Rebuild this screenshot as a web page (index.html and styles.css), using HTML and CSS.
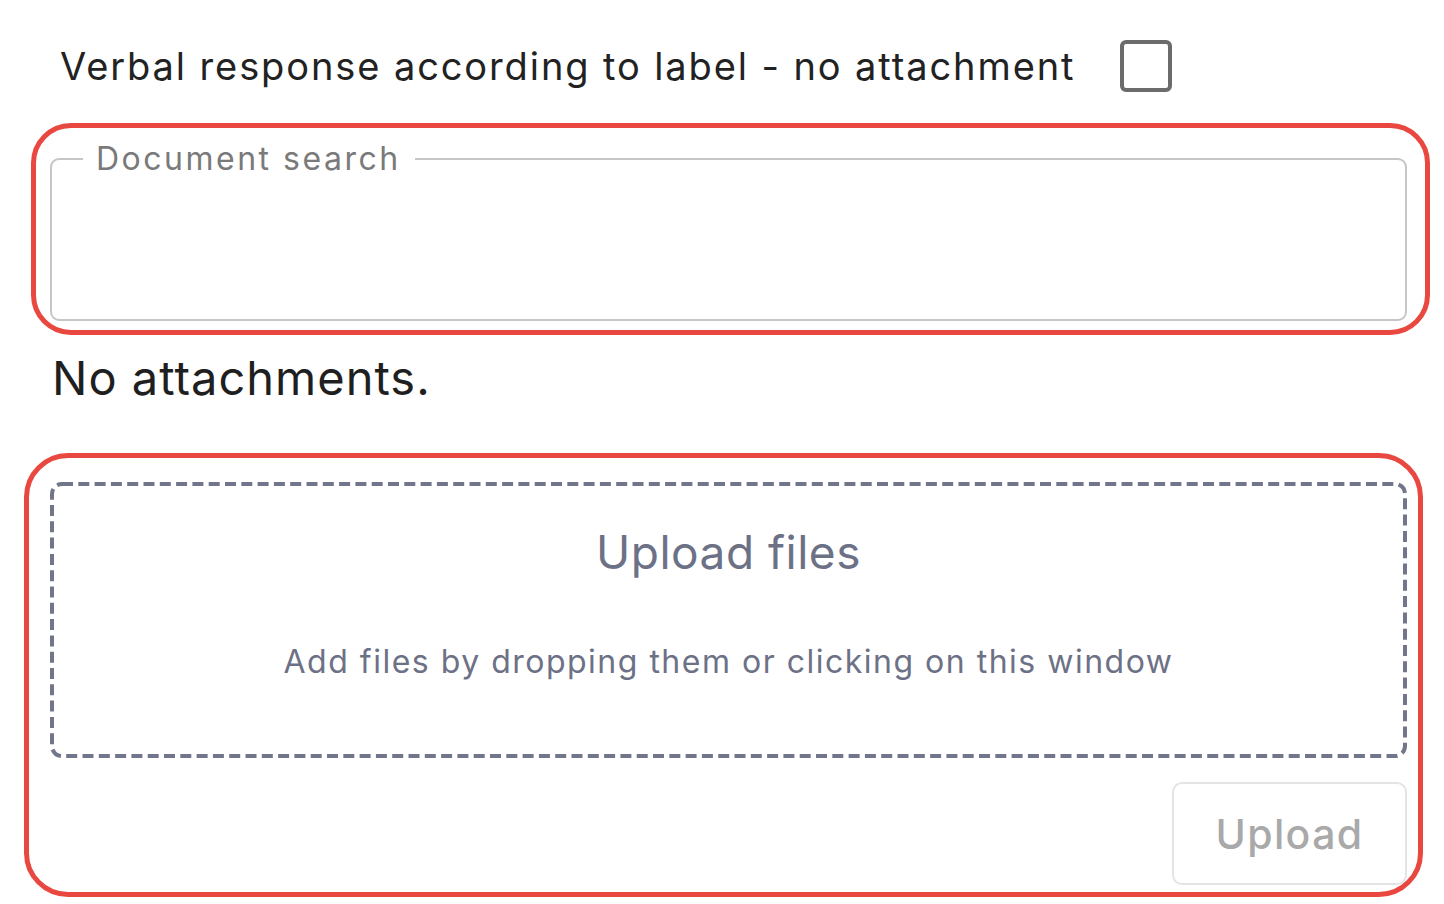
FILE: index.html
```html
<!DOCTYPE html>
<html lang="en">
<head>
<meta charset="utf-8">
<title>Attachments</title>
<link rel="stylesheet" href="styles.css">
</head>
<body>
<main class="page">
  <div class="verbal-row">
    <label class="verbal-label" for="verbal">Verbal response according to label - no attachment</label>
    <span class="checkbox" id="verbal" role="checkbox" aria-checked="false"></span>
  </div>

  <div class="mark mark-search">
    <fieldset class="search-field">
      <legend class="search-legend">Document search</legend>
    </fieldset>
  </div>

  <p class="empty-note">No attachments.</p>

  <div class="mark mark-upload">
    <div class="dropzone">
      <svg class="dash-frame" width="1357" height="276" aria-hidden="true">
        <rect x="2" y="2" width="1353" height="272" rx="10" ry="10"></rect>
      </svg>
      <div class="drop-title">Upload files</div>
      <div class="drop-hint">Add files by dropping them or clicking on this window</div>
    </div>
    <div class="actions">
      <button class="upload-btn" disabled>Upload</button>
    </div>
  </div>
</main>
</body>
</html>
```

FILE: styles.css
```css
html, body {
  margin: 0;
  padding: 0;
  background: #ffffff;
}

body {
  font-family: Inter, "Noto Sans", "Liberation Sans", sans-serif;
  color: #222222;
}

.page {
  display: flex;
  flex-direction: column;
  padding: 40px 0 0 0;
  width: 1444px;
  box-sizing: border-box;
}

.verbal-row {
  display: flex;
  align-items: center;
  gap: 45px;
  margin-left: 60px;
  height: 52px;
}

.verbal-label {
  font-size: 38px;
  line-height: 52px;
  color: #222222;
  letter-spacing: 1.9px;
}

.checkbox {
  width: 44px;
  height: 44px;
  border: 4px solid #6b6b6b;
  border-radius: 6px;
  flex: none;
}

.mark {
  border: 5px solid #e8483f;
  box-sizing: border-box;
}

.mark-search {
  margin-top: 31px;
  margin-left: 31px;
  width: 1399px;
  height: 212px;
  border-radius: 40px;
  padding: 11px 18px 0 14px;
}

.search-field {
  margin: 0;
  padding: 0;
  height: 182px;
  box-sizing: border-box;
  border: 2px solid #c6c6c6;
  border-radius: 9px;
}

.search-legend {
  margin-left: 31px;
  padding: 0 14px 0 13px;
  font-size: 32px;
  line-height: 40px;
  color: #7a7a7a;
  letter-spacing: 2.5px;
}

.empty-note {
  margin: 15px 0 0 52px;
  font-size: 47px;
  line-height: 56px;
  color: #1f1f1f;
  letter-spacing: 1px;
}

.mark-upload {
  margin-top: 47px;
  margin-left: 24px;
  width: 1399px;
  height: 444px;
  border-radius: 44px;
  padding: 24px 11px 0 21px;
  display: flex;
  flex-direction: column;
}

.dropzone {
  position: relative;
  width: 1357px;
  height: 276px;
  display: flex;
  flex-direction: column;
  align-items: center;
  color: #6d7186;
}

.dash-frame {
  position: absolute;
  left: 0;
  top: 0;
}

.dash-frame rect {
  fill: none;
  stroke: #72768a;
  stroke-width: 4;
  stroke-dasharray: 11 5.3;
}

.drop-title {
  margin-top: 42px;
  font-size: 46px;
  line-height: 56px;
  letter-spacing: 0.5px;
}

.drop-hint {
  margin-top: 62px;
  font-size: 32px;
  line-height: 40px;
  letter-spacing: 1.5px;
}

.actions {
  display: flex;
  justify-content: flex-end;
  margin-top: 24px;
}

.upload-btn {
  width: 235px;
  height: 103px;
  background: #ffffff;
  border: 2px solid #e4e4e4;
  border-radius: 10px;
  font-family: Inter, "Noto Sans", "Liberation Sans", sans-serif;
  font-size: 41px;
  font-weight: 500;
  color: #a9a9a9;
  letter-spacing: 1.4px;
  padding: 0;
}
```
